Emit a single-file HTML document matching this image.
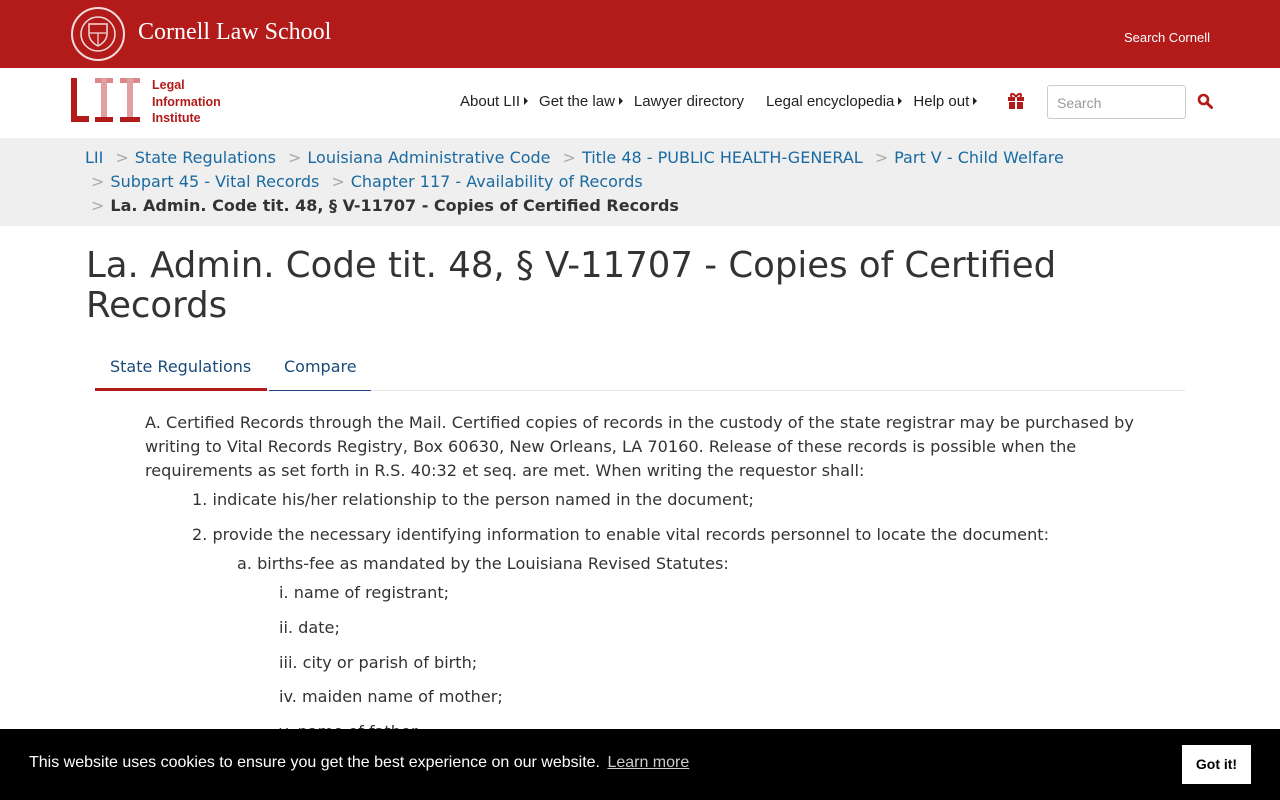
<!DOCTYPE html>
<html><head><meta charset="utf-8">
<style>
*{box-sizing:border-box;margin:0;padding:0}
body{width:1280px;height:800px;overflow:hidden;font-family:"DejaVu Sans","Liberation Sans",sans-serif;color:#333;background:#fff;position:relative}
.top{height:68px;background:#b31b1b;position:relative}
.seal{position:absolute;left:70px;top:6px;width:56px;height:56px}
.cls{position:absolute;left:138px;top:19px;color:#fff;font-family:"Liberation Serif",serif;font-size:24px}
.sc{position:absolute;right:70px;top:30px;color:#fff;font-family:"Liberation Sans",sans-serif;font-size:13px}
.bar{height:70px}
.lii{position:absolute;left:70px;top:78px}
.lii .t{position:absolute;left:82px;top:-1px;color:#b31b1b;font-family:"Liberation Sans",sans-serif;font-weight:bold;font-size:12.5px;line-height:16.5px;white-space:nowrap}
.nav{position:absolute;left:460px;top:93px;font-family:"Liberation Sans",sans-serif;font-size:15px;color:#222;white-space:nowrap}
.nav span{margin-right:9px}
.tri{display:inline-block;width:0;height:0;border-left:4px solid #222;border-top:4px solid transparent;border-bottom:4px solid transparent;margin-left:4px;margin-right:2px;vertical-align:1px}
.search{position:absolute;left:1047px;top:85px;width:139px;height:34px;border:1px solid #ccc;border-radius:3px;color:#999;font-size:14px;padding:9px 9px;font-family:"Liberation Sans",sans-serif}
.crumbs{background:#efefef;height:88px;padding:8px 0 0 85px;font-size:16px;line-height:24px;color:#1a6aa0;white-space:nowrap}
.crumbs .g{color:#aaa;margin:0 6px 0 12px}
.crumbs b{color:#333}
h1{font-weight:normal;font-size:35.5px;line-height:40px;color:#333;margin:20px 0 0 86px;width:1100px}
.tabs{margin:23px 95px 0 95px;border-bottom:1px solid #e5e5e5;height:42px;position:relative;font-size:16px}
.tab1{position:absolute;left:0;top:0;width:172px;height:42px;border-bottom:3px solid #b31b1b;color:#1a4a7a;padding:8px 15px}
.tab2{position:absolute;left:174px;top:0;width:102px;height:42px;border-bottom:1px solid #1a4a7a;color:#1a4a7a;padding:8px 15px}
.c{font-size:16.1px;line-height:24px;color:#333;position:absolute;left:0;top:0;width:1280px}
.c p{position:absolute;white-space:nowrap}
.cookie{position:absolute;left:0;top:729px;width:1280px;height:71px;background:#000;color:#fff;font-family:"Liberation Sans",sans-serif;font-size:16px}
.cookie .m{position:absolute;left:29px;top:25px}
.cookie u{color:#ccc;margin-left:3px}
.cookie .btn{position:absolute;left:1182px;top:16px;width:69px;height:39px;background:#fff;color:#000;font-weight:bold;font-size:14px;text-align:center;line-height:39px}
</style></head><body>
<div class="top">
<svg class="seal" viewBox="0 0 56 56"><circle cx="28" cy="28" r="26" fill="none" stroke="#f3dcdc" stroke-width="2"/><circle cx="28" cy="28" r="17" fill="none" stroke="#f3dcdc" stroke-width="1.5"/><path d="M19 18h18v10c0 8-9 12-9 12s-9-4-9-12z" fill="none" stroke="#f3dcdc" stroke-width="1.5"/><path d="M20 27h16M28 27v12" stroke="#f3dcdc" stroke-width="1.2"/></svg>
<div class="cls">Cornell Law School</div>
<div class="sc">Search Cornell</div>
</div>
<div class="bar"></div>
<div class="lii">
<svg width="72" height="46" viewBox="0 0 72 46"><rect x="1" y="0" width="6" height="44" fill="#b31b1b"/><rect x="1" y="38" width="18" height="6" fill="#b31b1b"/><rect x="25" y="0" width="18" height="5" fill="#d88"/><rect x="31" y="0" width="6" height="44" fill="#e0a0a0"/><rect x="25" y="39" width="18" height="5" fill="#b31b1b"/><rect x="50" y="0" width="20" height="5" fill="#d88"/><rect x="57" y="0" width="6" height="44" fill="#e0a0a0"/><rect x="50" y="39" width="20" height="5" fill="#b31b1b"/></svg>
<div class="t">Legal<br>Information<br>Institute</div>
</div>
<div class="nav"><span>About LII<i class="tri"></i></span><span>Get the law<i class="tri"></i></span><span style="margin-right:22px">Lawyer directory</span><span>Legal encyclopedia<i class="tri"></i></span><span>Help out<i class="tri"></i></span></div>
<svg style="position:absolute;left:1007px;top:92px" width="18" height="17" viewBox="0 0 18 17"><rect x="1" y="5" width="16" height="4" fill="#b31b1b"/><rect x="2" y="10" width="14" height="7" fill="#b31b1b"/><rect x="8" y="5" width="2" height="12" fill="#fff"/><path d="M9 5C6 0 2 2 5 5M9 5c3-5 7-3 4 0" stroke="#b31b1b" stroke-width="2" fill="none"/></svg>
<div class="search">Search</div>
<svg style="position:absolute;left:1197px;top:93px" width="16" height="16" viewBox="0 0 16 16"><circle cx="6.5" cy="6.5" r="4.5" fill="none" stroke="#b31b1b" stroke-width="2.6"/><path d="M10 10l4.5 4.5" stroke="#b31b1b" stroke-width="3" stroke-linecap="round"/></svg>
<div class="crumbs">LII<span class="g">&gt;</span>State Regulations<span class="g">&gt;</span>Louisiana Administrative Code<span class="g">&gt;</span>Title 48 - PUBLIC HEALTH-GENERAL<span class="g">&gt;</span>Part V - Child Welfare<br><span class="g" style="margin-left:6px">&gt;</span>Subpart 45 - Vital Records<span class="g">&gt;</span>Chapter 117 - Availability of Records<br><span class="g" style="margin-left:6px">&gt;</span><b>La. Admin. Code tit. 48, § V-11707 - Copies of Certified Records</b></div>
<h1>La. Admin. Code tit. 48, § V-11707 - Copies of Certified Records</h1>
<div class="tabs"><div class="tab1">State Regulations</div><div class="tab2">Compare</div></div>
<div class="c">
<p style="left:145px;top:411px">A. Certified Records through the Mail. Certified copies of records in the custody of the state registrar may be purchased by</p>
<p style="left:145px;top:435px">writing to Vital Records Registry, Box 60630, New Orleans, LA 70160. Release of these records is possible when the</p>
<p style="left:145px;top:459px">requirements as set forth in R.S. 40:32 et seq. are met. When writing the requestor shall:</p>
<p style="left:192px;top:488px">1. indicate his/her relationship to the person named in the document;</p>
<p style="left:192px;top:523px">2. provide the necessary identifying information to enable vital records personnel to locate the document:</p>
<p style="left:237px;top:552px">a. births-fee as mandated by the Louisiana Revised Statutes:</p>
<p style="left:279px;top:581px">i. name of registrant;</p>
<p style="left:279px;top:616px">ii. date;</p>
<p style="left:279px;top:651px">iii. city or parish of birth;</p>
<p style="left:279px;top:685px">iv. maiden name of mother;</p>
<p style="left:279px;top:720px">v. name of father;</p>
</div>
<div class="cookie"><div class="m">This website uses cookies to ensure you get the best experience on our website. <u>Learn more</u></div><div class="btn">Got it!</div></div>
</body></html>
